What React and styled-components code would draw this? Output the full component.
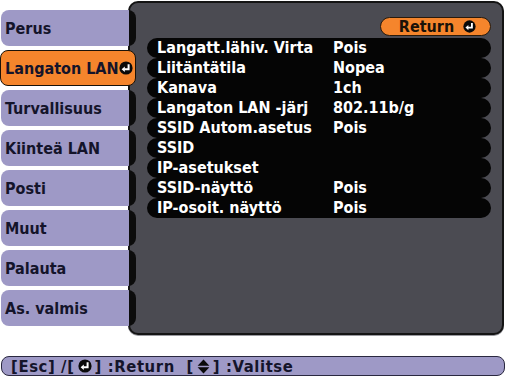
import React from 'react';
import styled, { createGlobalStyle } from 'styled-components';

const Global = createGlobalStyle`
  html, body { margin: 0; padding: 0; background: #ffffff; }
  body {
    font-family: "DejaVu Sans Condensed", "DejaVu Sans", "Liberation Sans", sans-serif;
    font-stretch: condensed;
    font-weight: bold;
  }
`;

const Screen = styled.div`
  width: 506px;
  height: 380px;
  display: flex;
  flex-direction: column;
  overflow: hidden;
`;

const Top = styled.div`
  display: flex;
  padding-top: 1px;
`;

const Tabs = styled.div`
  width: 136px;
  margin-right: -8px;
  padding-top: 9px;
  display: flex;
  flex-direction: column;
  gap: 4px;
  position: relative;
  z-index: 1;
`;

const Tab = styled.div`
  height: 36px;
  box-sizing: border-box;
  display: flex;
  align-items: center;
  padding-left: 4px;
  font-size: 16px;
  color: #14142a;
  border-radius: 8px;
  white-space: nowrap;
  background: ${p => p.$active
    ? '#f5852c'
    : 'linear-gradient(to right, #9e99c6 128px, #0c0c0c 128px)'};
  border: ${p => p.$active ? '1px solid #1a1208' : 'none'};
  margin-left: ${p => p.$active ? '0' : '1px'};
`;

const Panel = styled.div`
  width: 376px;
  height: 334px;
  box-sizing: border-box;
  background: #4b4b52;
  border: 2px solid #141414;
  border-radius: 10px;
  padding: 14px 11px 0 17px;
  display: flex;
  flex-direction: column;
  box-shadow: 0 1px 0 #9a9aa0;
`;

const ReturnBar = styled.div`
  display: flex;
  justify-content: flex-end;
  margin-bottom: 2px;
`;

const ReturnButton = styled.div`
  width: 111px;
  height: 19px;
  box-sizing: border-box;
  background: #f5852c;
  border: 1px solid #2a1a0a;
  border-radius: 10px;
  display: flex;
  align-items: center;
  justify-content: center;
  gap: 9px;
  font-size: 16px;
  color: #1a1208;
  padding-left: 4px;
`;

const Row = styled.div`
  height: 20px;
  background: #050505;
  border-radius: 10px;
  display: grid;
  grid-template-columns: 176px 1fr;
  align-items: center;
  padding-left: 10px;
  font-size: 16px;
  color: #ffffff;
  line-height: 20px;
  white-space: nowrap;
`;

const Footer = styled.div`
  margin: 21px 1px 0 1px;
  height: 20px;
  box-sizing: border-box;
  background: #9e99c6;
  border: 1px solid #2a2840;
  border-radius: 8px;
  display: flex;
  align-items: center;
  padding-left: 9px;
  font-size: 16.5px;
  letter-spacing: 0.6px;
  color: #14142a;
  white-space: pre;
`;

const Glyph = styled.svg`
  flex: none;
  display: inline-block;
  vertical-align: middle;
  margin: ${p => p.$gap || '0'};
`;

function EnterIcon({ size = 13, gap }) {
  return (
    <Glyph $gap={gap} width={size} height={size} viewBox="0 0 14 14">
      <circle cx="7" cy="7" r="6.6" fill="#0a0a0a" />
      <path d="M9.6 3.2 V8.2 H5.2" stroke="#fff" strokeWidth="2" fill="none" />
      <path d="M2.6 8.2 L5.8 5.4 L5.8 11 Z" fill="#fff" />
    </Glyph>
  );
}

function UpDownIcon({ gap }) {
  return (
    <Glyph $gap={gap} width={13} height={15} viewBox="0 0 12 14">
      <path d="M6 0.5 L11.5 6.2 H0.5 Z" fill="#0a0a0a" />
      <path d="M6 13.5 L11.5 7.8 H0.5 Z" fill="#0a0a0a" />
    </Glyph>
  );
}

const tabs = ['Perus', 'Langaton LAN', 'Turvallisuus', 'Kiinteä LAN', 'Posti', 'Muut', 'Palauta', 'As. valmis'];

const rows = [
  ['Langatt.lähiv. Virta', 'Pois'],
  ['Liitäntätila', 'Nopea'],
  ['Kanava', '1ch'],
  ['Langaton LAN -järj', '802.11b/g'],
  ['SSID Autom.asetus', 'Pois'],
  ['SSID', ''],
  ['IP-asetukset', ''],
  ['SSID-näyttö', 'Pois'],
  ['IP-osoit. näyttö', 'Pois'],
];

export default function App() {
  return (
    <Screen>
      <Global />
      <Top>
        <Tabs>
          {tabs.map((t, i) => (
            <Tab key={t} $active={i === 1}>
              {t}
              {i === 1 && <EnterIcon size={14} />}
            </Tab>
          ))}
        </Tabs>
        <Panel>
          <ReturnBar>
            <ReturnButton>
              Return
              <EnterIcon size={13} />
            </ReturnButton>
          </ReturnBar>
          {rows.map(([label, value]) => (
            <Row key={label}>
              <span>{label}</span>
              <span>{value}</span>
            </Row>
          ))}
        </Panel>
      </Top>
      <Footer>
        [Esc] /[<EnterIcon size={14} gap="0 3px" />] :Return  [<UpDownIcon gap="0 3px" />] :Valitse
      </Footer>
    </Screen>
  );
}
